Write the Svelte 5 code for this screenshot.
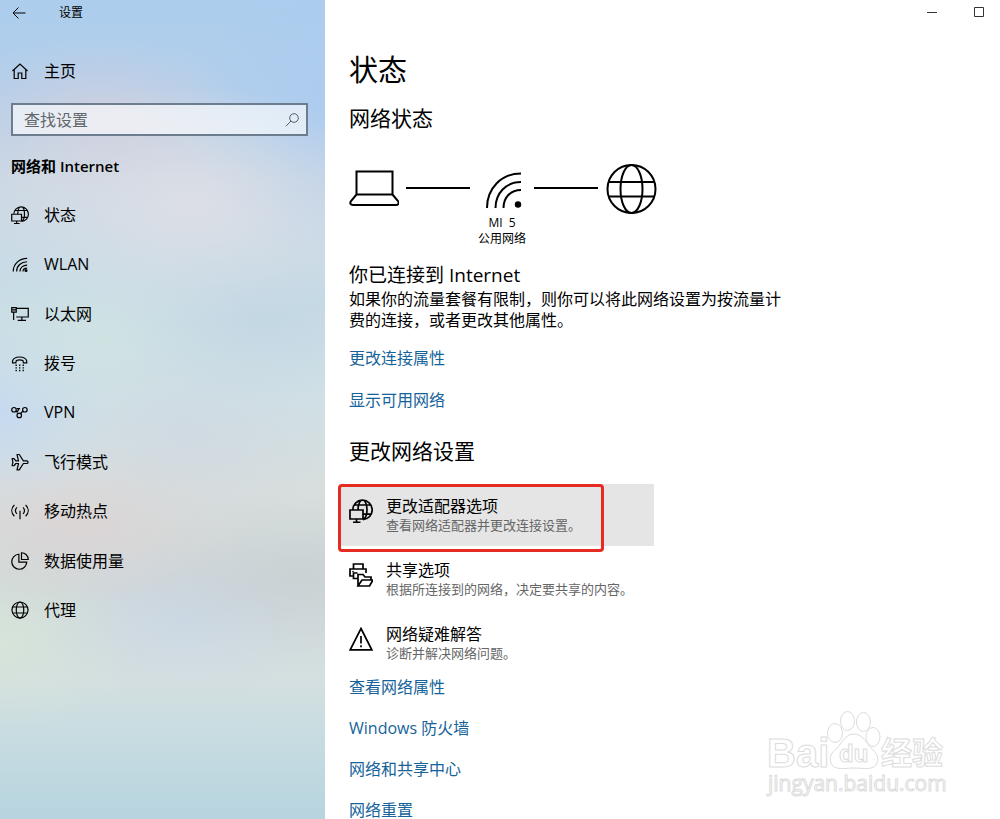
<script>
  const nav = [
    { id: 'status', label: '状态' },
    { id: 'wlan', label: 'WLAN' },
    { id: 'ethernet', label: '以太网' },
    { id: 'dialup', label: '拨号' },
    { id: 'vpn', label: 'VPN' },
    { id: 'airplane', label: '飞行模式' },
    { id: 'hotspot', label: '移动热点' },
    { id: 'usage', label: '数据使用量' },
    { id: 'proxy', label: '代理' }
  ];

  const options = [
    { id: 'status', title: '更改适配器选项', note: '查看网络适配器并更改连接设置。', marked: true },
    { id: 'sharing', title: '共享选项', note: '根据所连接到的网络，决定要共享的内容。' },
    { id: 'trouble', title: '网络疑难解答', note: '诊断并解决网络问题。' }
  ];

  const related = ['查看网络属性', 'Windows 防火墙', '网络和共享中心', '网络重置'];
</script>

{#snippet icon(id)}
  <svg class="icon" viewBox="0 0 24 24" aria-hidden="true">
    {#if id === 'status'}
      <path d="M3.800 11A9.700 9.700 0 1 1 14 20.600M9 11C9 5 11 1 13.500 1S18 5 18 11c0 4.500-2 8.500-4 9.600M5.500 6h16M14 15.200h8.500M1 11h13v9H1zM7.500 20v3.300M4 23.300h7.500" />
    {:else if id === 'wlan'}
      <path d="M3 22C3 12 11 4.500 21.500 4.500M7.500 22C7.500 14.500 13.500 9 21.500 9M12 22c0-5 4-8.500 9.500-8.500M16 22c0-2.500 2-4.500 5.500-4.500" />
      <circle cx="20" cy="20.500" r="2" fill="currentColor" stroke="none" />
    {:else if id === 'ethernet'}
      <path d="M7 4.500h16V16H7M14.500 16v4.500M9 20.500h11M1 3.500h6v6H1zM1 6.500h6M3.500 9.500v10.500" />
    {:else if id === 'dialup'}
      <path d="M2 9.500C3 5.500 8 4 11.500 4S20 5.500 21 9.500v2.200h-4.500L16 8.800c-3-1.200-6-1.200-9 0l-.5 2.900H2z" />
      <path stroke-width="1.800" stroke-dasharray="1.800 2.900" d="M6 15h12M6 18.500h12M6 22h12" />
    {:else if id === 'vpn'}
      <circle cx="4" cy="9" r="3" />
      <circle cx="18.500" cy="9" r="3" />
      <circle cx="11" cy="16.500" r="3" />
      <path d="M6.500 10.500 8 12l3-4.500h-3.500M16 10.500l-3 3.500" />
    {:else if id === 'airplane'}
      <path stroke-linejoin="round" d="M1.500 7.500H4l2.500 3H10L8 2h3l5.500 8.500H21c2.300 0 2.300 3.500 0 3.500h-4.500L11 22.500H8l2-8.500H6.500L4 17H1.500l1-4.700z" />
    {:else if id === 'hotspot'}
      <path d="M4.500 4C0 8.500 0 14.500 4.500 19M8 7.200c-2.600 2.600-2.600 6 0 8.600M19.500 4c4.500 4.500 4.500 10.500 0 15M16 7.200c2.600 2.600 2.600 6 0 8.600M12 11.500V23" />
    {:else if id === 'usage'}
      <path d="M10.500 3A10 10 0 1 0 21 13.500H10.500zM14 1v9h9C23 5 19 1 14 1z" />
    {:else if id === 'proxy'}
      <circle cx="12" cy="12" r="10.700" />
      <ellipse cx="12" cy="12" rx="5" ry="10.700" />
      <path d="M2.200 8h19.600M2.200 16h19.600" />
    {:else if id === 'sharing'}
      <path d="M4.500 6V1H14v5M4.500 13H1V6h16v4M8.500 10h-4v5.500h4M9 23V11.500h5l2 2.500h6v3M9 23l4-6h11l-3.500 6z" />
      <circle cx="4" cy="8.500" r=".8" fill="currentColor" stroke="none" />
    {:else if id === 'trouble'}
      <path d="M12 1.500 22.800 22.800H1.200zM12 9v7.500M12 18.300v2" />
    {/if}
  </svg>
{/snippet}

<div class="window">
  <aside>
    <div class="titlebar">
      <button class="plain" aria-label="返回">
        <svg viewBox="0 0 14 12" width="14" height="12" aria-hidden="true"><path d="M13.500 6H1M6.500.5 1 6l5.500 5.500" /></svg>
      </button>
      <span>设置</span>
    </div>
    <a class="home" href="#home">
      <svg class="icon" viewBox="0 0 18 18" aria-hidden="true"><path d="M1.500 9 9 2l7.500 7M3.200 8v8.500h4V11h3.600v5.500h4V8" /></svg>
      主页
    </a>
    <div class="search">
      <input type="text" placeholder="查找设置" aria-label="查找设置" />
      <svg viewBox="0 0 14 14" width="14" height="14" aria-hidden="true"><circle cx="9" cy="5" r="4.300" /><path d="M6 8 .8 13.300" /></svg>
    </div>
    <h2 class="group">网络和 Internet</h2>
    <nav>
      {#each nav as item}
        <a href="#{item.id}">{@render icon(item.id)}{item.label}</a>
      {/each}
    </nav>
  </aside>

  <main>
    <div class="controls">
      <button class="plain" aria-label="最小化"><svg viewBox="0 0 12 12" width="12" height="12" aria-hidden="true"><path d="M1 6.500h10" /></svg></button>
      <button class="plain" aria-label="最大化"><svg viewBox="0 0 12 12" width="12" height="12" aria-hidden="true"><path d="M1.500 1.500h9v9h-9z" /></svg></button>
    </div>

    <h1>状态</h1>
    <h2>网络状态</h2>

    <div class="diagram">
      <svg viewBox="0 0 50 51" width="50" height="52" aria-hidden="true"><path d="M7.500 8h36v23h-36zM7.500 31 2 37.500C.5 39.500 1.500 41.500 4 41.500h43c2.500 0 3.500-2 2-4L43.500 31" /></svg>
      <span class="wire"></span>
      <div class="network">
        <svg viewBox="0 0 50 51" width="50" height="52" aria-hidden="true">
          <path d="M10 44.500C10 25 24 10 44 10M18.500 44.500C18.500 30 29 18.500 44 18.500M26.500 44.500C26.500 34 33.500 26.500 44 26.500" />
          <circle cx="41" cy="41" r="3.200" fill="#000" stroke="none" />
        </svg>
        <span>MI&nbsp; 5</span>
        <span>公用网络</span>
      </div>
      <span class="wire"></span>
      <svg viewBox="0 0 52 51" width="52" height="52" aria-hidden="true"><circle cx="26.500" cy="25.500" r="24" /><ellipse cx="26.500" cy="25.500" rx="11" ry="24" /><path d="M4 18.500h45M4 33h45" /></svg>
    </div>

    <h3>你已连接到 Internet</h3>
    <p>如果你的流量套餐有限制，则你可以将此网络设置为按流量计费的连接，或者更改其他属性。</p>
    <div class="links">
      <a href="#properties">更改连接属性</a>
      <a href="#available">显示可用网络</a>
    </div>

    <h2 class="change">更改网络设置</h2>
    <div class="options">
      {#each options as option}
        <button class="option" class:marked={option.marked}>
          {@render icon(option.id)}
          <span class="text"><span class="title">{option.title}</span><span class="note">{option.note}</span></span>
        </button>
      {/each}
    </div>
    <div class="links related">
      {#each related as label}<a href="#related">{label}</a>{/each}
    </div>
  </main>

  <svg class="watermark" viewBox="0 0 184 92" width="184" height="92" role="img" aria-label="Baidu 经验">
    <text x="2" y="57" class="logo" font-size="40">Bai</text>
    <ellipse cx="70" cy="23" rx="7.500" ry="9.500" /><ellipse cx="82.500" cy="11" rx="7" ry="9.500" />
    <ellipse cx="98.500" cy="12" rx="7" ry="9.500" /><ellipse cx="108" cy="27" rx="7" ry="9.500" />
    <path d="M89 24c-9 0-12 9-17 14-6 5-8 9-6 15 3 8 14 5 23 5s20 3 23-5c2-6 0-10-6-15-5-5-8-14-17-14z" />
    <text x="74" y="52" class="logo" font-size="24">du</text>
    <text x="116" y="54" class="logo" font-size="31">经验</text>
    <text x="3" y="81" class="site" font-size="21">jingyan.baidu.com</text>
  </svg>
</div>

<style>
  :global(body) {
    margin: 0;
    background: #fff;
  }

  .window {
    position: relative;
    display: flex;
    height: 100vh;
    overflow: hidden;
    color: #000;
    font: 16px/20px "Open Sans", "Noto Sans CJK SC", sans-serif;
  }

  svg {
    flex: none;
    fill: none;
    stroke: currentColor;
  }

  a {
    color: inherit;
    text-decoration: none;
  }

  h1, h2, h3, p {
    margin: 0;
    font-weight: 400;
  }

  button {
    border: 0;
    padding: 0;
    background: none;
    color: inherit;
    font: inherit;
    text-align: left;
  }

  .plain {
    display: flex;
  }

  aside {
    flex: 0 0 325px;
    box-sizing: border-box;
    padding: 0 17px 0 11px;
    background:
      radial-gradient(ellipse 150px 80px at 100px 115px, #dccfd899, #dccfd833 60%, #dccfd800),
      radial-gradient(ellipse 210px 120px at 190px 205px, #e0e0e6cc, #dfe0e655 55%, #dfe0e600),
      radial-gradient(ellipse 140px 150px at 325px 110px, #a9caf0cc, #a9caf055 55%, #a9caf000),
      radial-gradient(ellipse 150px 90px at 265px 315px, #bfd3e299, #bfd3e233 60%, #bfd3e200),
      radial-gradient(ellipse 150px 90px at 100px 335px, #d2e5e099, #cfe4e033 60%, #cfe4e000),
      radial-gradient(ellipse 110px 100px at 0 415px, #c3d8f2cc, #c3d8f244 60%, #c3d8f200),
      radial-gradient(ellipse 150px 100px at 190px 435px, #cdd6e199, #cdd6e133 60%, #cdd6e100),
      radial-gradient(ellipse 170px 80px at 80px 525px, #dfd0d199, #dfd0d133 60%, #dfd0d100),
      radial-gradient(ellipse 200px 80px at 300px 575px, #c4cdd099, #c4cdd033 60%, #c4cdd000),
      radial-gradient(ellipse 140px 80px at 185px 620px, #c9d7eb99, #c9d7eb33 60%, #c9d7eb00),
      radial-gradient(ellipse 140px 90px at 0 640px, #d7e6d8cc, #d7e6d844 60%, #d7e6d800),
      linear-gradient(#accded 0, #b3cfeb 90px, #ccd8e4 180px, #c8dce7 290px, #d0e0e5 400px, #d8dedd 490px, #d0d8d9 590px, #d4dfe0 680px, #c6dce1 740px, #b7d4df 819px);
  }

  .titlebar {
    display: flex;
    align-items: center;
    gap: 33px;
    height: 25px;
    padding-left: 1px;
    font-size: 12px;
  }

  .icon {
    width: 18px;
    height: 18px;
    stroke-width: 1.6;
  }

  .home {
    display: flex;
    align-items: center;
    gap: 15px;
    margin-top: 36px;
  }

  .home .icon {
    stroke-width: 1.2;
  }

  .search {
    display: flex;
    align-items: center;
    box-sizing: border-box;
    height: 33px;
    margin-top: 22px;
    padding: 0 7px 0 11px;
    border: 2px solid #6b7d8f;
    background: #ffffff99;
    color: #555c64;
  }

  input {
    flex: 1;
    min-width: 0;
    border: 0;
    padding: 0;
    outline: 0;
    background: none;
    font: inherit;
  }

  input::placeholder {
    color: #62676d;
    opacity: 1;
  }

  .group {
    margin-top: 20px;
    font-size: 15px;
    font-weight: 600;
  }

  nav {
    display: grid;
    grid-auto-rows: 1fr;
    height: 445px;
    margin-top: 14px;
  }

  nav a {
    display: flex;
    align-items: center;
    gap: 15px;
  }

  main {
    flex: 1;
    min-width: 0;
    padding-left: 24px;
    overflow-y: auto;
    scrollbar-width: none;
  }

  .controls {
    display: flex;
    align-items: center;
    justify-content: flex-end;
    gap: 35px;
    height: 24px;
    padding-right: 15px;
    color: #333;
  }

  h1 {
    margin-top: 26px;
    font-size: 29px;
    line-height: 40px;
  }

  h2 {
    font-size: 21px;
    line-height: 28px;
  }

  h1 + h2 {
    margin-top: 14px;
  }

  .group {
    line-height: 20px;
  }

  .diagram {
    display: flex;
    align-items: flex-start;
    gap: 7px;
    margin-top: 31px;
    font-size: 12px;
    line-height: 16px;
  }

  .diagram svg {
    stroke-width: 2;
  }

  .wire {
    width: 64px;
    height: 2px;
    margin-top: 24px;
    background: #000;
  }

  .network {
    display: flex;
    flex-direction: column;
    align-items: center;
    width: 50px;
  }

  h3 {
    margin-top: 14px;
    font-size: 19px;
    line-height: 28px;
  }

  p {
    max-width: 440px;
    line-height: 21px;
  }

  .links {
    display: flex;
    flex-direction: column;
    align-items: flex-start;
    gap: 22px;
    margin-top: 17px;
    color: #15639a;
  }

  .change {
    margin-top: 27px;
  }

  .options {
    display: flex;
    flex-direction: column;
    gap: 2px;
    margin: 19px 0 0 -8px;
  }

  .option {
    position: relative;
    display: flex;
    gap: 13px;
    box-sizing: border-box;
    width: 313px;
    height: 62px;
    padding: 12px 8px 0;
  }

  .option .icon {
    width: 24px;
    height: 24px;
    margin-top: 3px;
    stroke-width: 1.7;
  }

  .marked {
    background: #e5e5e5;
  }

  .marked::after {
    content: "";
    position: absolute;
    top: 0;
    left: -3px;
    width: 260px;
    height: 62px;
    border: 3px solid #e62b23;
    border-radius: 4px;
  }

  .text {
    display: flex;
    flex-direction: column;
    white-space: nowrap;
  }

  .note {
    color: #666;
    font-size: 13px;
    line-height: 18px;
  }

  .related {
    gap: 21px;
    margin-top: 3px;
    padding-bottom: 24px;
  }

  .watermark {
    position: absolute;
    right: 51px;
    bottom: 17px;
    fill: #fff;
    stroke: #dcdcdc;
    pointer-events: none;
  }

  .logo {
    font-family: "Liberation Sans", "Noto Sans CJK SC", sans-serif;
    font-weight: 700;
  }

  .site {
    font-family: "Open Sans", sans-serif;
  }
</style>
